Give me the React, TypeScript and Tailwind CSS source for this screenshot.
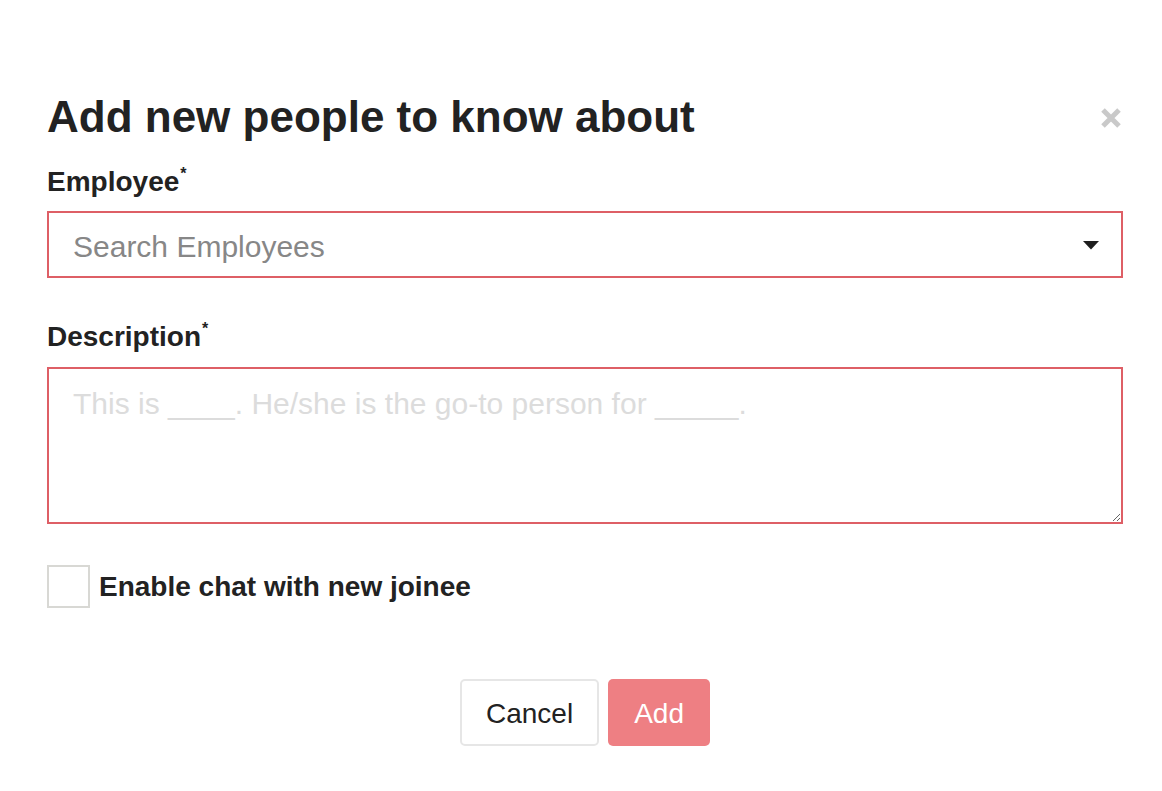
import { useState } from "react";

export default function App() {
  const [chat, setChat] = useState(false);

  return (
    <div className="min-h-screen bg-white pl-[47px] pr-[39px] pt-[93px] text-[#222222] [font-family:'Liberation_Sans',Arial,sans-serif]">
      {/* Header */}
      <div className="flex items-center justify-between">
        <h1 className="text-[44px] leading-[48px] font-bold">Add new people to know about</h1>
        <button className="mr-[1px] mt-[2px] text-[#c9c9c9]" aria-label="Close">
          <svg width="22" height="22" viewBox="0 0 22 22">
            <path d="M3 3 L19 19 M19 3 L3 19" stroke="currentColor" strokeWidth="5" strokeLinecap="butt" />
          </svg>
        </button>
      </div>

      {/* Employee */}
      <label className="mt-[25px] block text-[28px] leading-[32px] font-bold">
        Employee<sup className="ml-[1px] text-[16px] align-[4px]">*</sup>
      </label>
      <div className="mt-[13px] flex h-[67px] items-center border-2 border-[#de5f66] pl-[24px] pr-[22px]">
        <input
          placeholder="Search Employees"
          className="mt-[4px] flex-1 bg-transparent text-[30px] outline-none placeholder:text-[#878787]"
        />
        <svg width="16" height="9" viewBox="0 0 16 9" className="mt-[1px]">
          <path d="M0 0 H16 L8 8.5 Z" fill="#1e1e1e" />
        </svg>
      </div>

      {/* Description */}
      <label className="mt-[43px] block text-[28px] leading-[32px] font-bold">
        Description<sup className="ml-[1px] text-[16px] align-[4px]">*</sup>
      </label>
      <textarea
        placeholder="This is ____. He/she is the go-to person for _____."
        className="mt-[14px] block h-[157px] w-full border-2 border-[#de5f66] px-[24px] pt-[17px] text-[30px] leading-[36px] outline-none placeholder:text-[#dcdcdc]"
      />

      {/* Checkbox */}
      <label className="mt-[41px] flex items-center gap-[9px]">
        <span
          onClick={() => setChat(!chat)}
          className="flex h-[43px] w-[43px] items-center justify-center border-2 border-[#d8d8d4] bg-white"
        >
          {chat && <span className="text-[24px]">✓</span>}
        </span>
        <span className="text-[28px] leading-[32px] font-bold">Enable chat with new joinee</span>
      </label>

      {/* Actions */}
      <div className="mt-[71px] flex justify-center gap-[9px]">
        <button className="h-[67px] rounded-[5px] border-2 border-[#e6e6e6] bg-white px-[24px] pt-[2px] text-[28px] text-[#222222]">
          Cancel
        </button>
        <button className="h-[67px] rounded-[5px] bg-[#ee7f83] px-[26px] pt-[2px] text-[28px] text-white">Add</button>
      </div>
    </div>
  );
}
